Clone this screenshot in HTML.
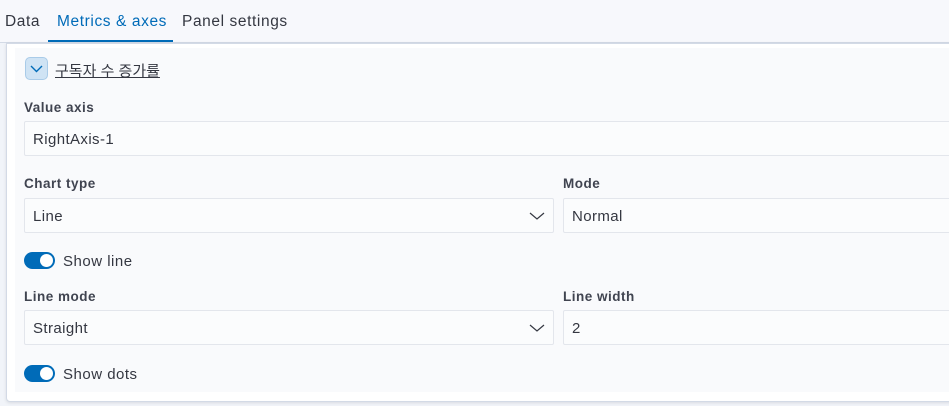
<!DOCTYPE html>
<html><head><style>
*{box-sizing:border-box;margin:0;padding:0}
body{width:949px;height:406px;overflow:hidden;background:#f1f4f9;font-family:"Liberation Sans","Noto Sans CJK KR",sans-serif;color:#343741;position:relative}
.tabs{position:absolute;left:0;top:0;width:949px;height:43px;background:#f7f8fc;border-bottom:1px solid #d3dae6}
.tab{position:absolute;top:13px;font-size:15.5px;letter-spacing:.6px;color:#343741}
.ul{position:absolute;left:48px;top:40px;width:125px;height:2px;background:#006bb8}
.outer{position:absolute;left:6px;top:43px;width:960px;height:359px;background:#fff;border:1px solid #d3dae6;border-radius:0 0 4px 4px;box-shadow:0 1px 3px rgba(0,0,0,.1)}
.inner{position:absolute;left:15px;top:48px;width:940px;height:344px;background:#f9fafc}
.lab{position:absolute;font-size:13.5px;font-weight:bold;letter-spacing:.5px;color:#404450}
.inp{position:absolute;height:35px;background:#fbfcfd;border:1px solid #e3e6ec;border-radius:2px;font-size:15px;letter-spacing:.4px;color:#343741;padding:9px 8px}
.chev{position:absolute;right:8px;top:11px}
.tog{position:absolute;left:24px;width:31px;height:17px;border-radius:9px;background:#006bb8}
.tog::after{content:"";position:absolute;right:2px;top:2px;width:13px;height:13px;border-radius:50%;background:#fff}
.tl{position:absolute;left:63px;font-size:15px;letter-spacing:.5px;color:#343741}
</style></head><body>
<div class="tabs">
<div class="tab" style="left:5px">Data</div>
<div class="tab" style="left:57px;color:#006bb8">Metrics &amp; axes</div>
<div class="tab" style="left:182px">Panel settings</div>
<div class="ul"></div>
</div>
<div class="outer"></div>
<div class="inner"></div>
<div style="position:absolute;left:25px;top:57px;width:23px;height:23px;border-radius:5px;background:#cfe3f4;border:1px solid #a9cbe8"><svg style="position:absolute;left:3px;top:3px" width="15" height="15" viewBox="0 0 15 15"><path d="M2 5 L7.5 10.5 L13 5" fill="none" stroke="#006bb8" stroke-width="1.4"/></svg></div>
<div style="position:absolute;left:55px;top:60px;font-size:15px;text-decoration:underline;color:#343741">구독자 수 증가률</div>
<div class="lab" style="left:24px;top:100px">Value axis</div>
<div class="inp" style="left:24px;top:121px;width:940px">RightAxis-1</div>
<div class="lab" style="left:24px;top:176px">Chart type</div>
<div class="inp" style="left:24px;top:198px;width:530px">Line<svg class="chev" width="16" height="12" viewBox="0 0 16 12"><path d="M1 3 L8 9 L15 3" fill="none" stroke="#343741" stroke-width="1.2"/></svg></div>
<div class="lab" style="left:563px;top:176px">Mode</div>
<div class="inp" style="left:563px;top:198px;width:400px">Normal</div>
<div class="tog" style="top:252px"></div><div class="tl" style="top:253px">Show line</div>
<div class="lab" style="left:24px;top:289px">Line mode</div>
<div class="inp" style="left:24px;top:310px;width:530px">Straight<svg class="chev" width="16" height="12" viewBox="0 0 16 12"><path d="M1 3 L8 9 L15 3" fill="none" stroke="#343741" stroke-width="1.2"/></svg></div>
<div class="lab" style="left:563px;top:289px">Line width</div>
<div class="inp" style="left:563px;top:310px;width:400px">2</div>
<div class="tog" style="top:365px"></div><div class="tl" style="top:366px">Show dots</div>
</body></html>
